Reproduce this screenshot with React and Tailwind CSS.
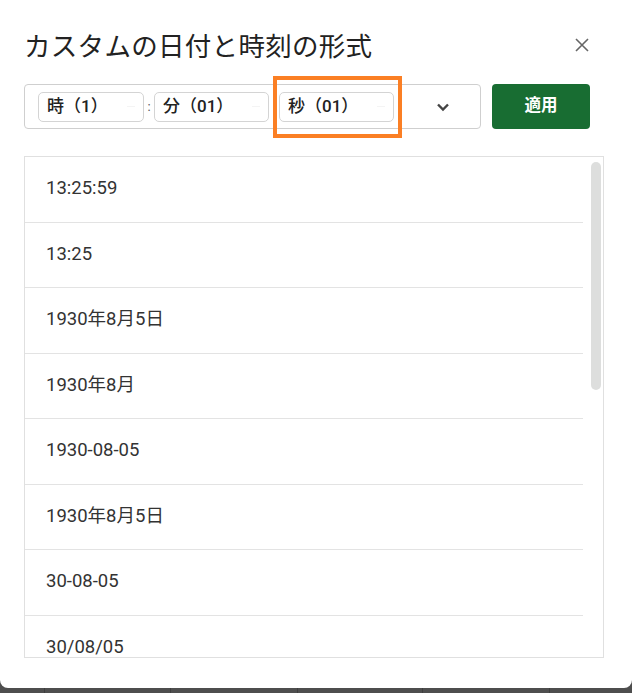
import React from "react";

const rows = [
  "13:25:59",
  "13:25",
  "1930年8月5日",
  "1930年8月",
  "1930-08-05",
  "1930年8月5日",
  "30-08-05",
  "30/08/05",
];

function Chip({ label, w }) {
  return (
    <div
      className={`${w} h-[30px] shrink-0 flex items-center justify-between pl-[8px] pr-[8px] border border-[#d4d4d4] rounded-[5px] bg-white`}
    >
      <span className="text-[17px] font-medium text-[#222] leading-none">{label}</span>
      <span className="w-[8px] h-[1px] bg-[#f4f4f4]" />
    </div>
  );
}

export default function App() {
  return (
    <div
      className="w-[632px] h-[693px] flex flex-col bg-[#4e4e4e] overflow-hidden"
      style={{ fontFamily: '"Roboto", "Noto Sans CJK JP", sans-serif' }}
    >
      <div className="h-[688px] shrink-0 bg-white rounded-b-[8px] flex flex-col pl-[24px] pr-[29px]">
        <div className="flex items-center justify-between pt-[29px] h-[61px]">
          <h1
            className="text-[26.5px] leading-[32px] font-normal text-[#222] tracking-[0.3px]"
            style={{ fontFamily: '"Noto Sans CJK JP", sans-serif' }}
          >
            カスタムの日付と時刻の形式
          </h1>
          <svg width="16" height="16" viewBox="0 0 16 16" className="mr-[13px]">
            <path d="M2 2 L14 14 M14 2 L2 14" stroke="#666" strokeWidth="1.6" fill="none" />
          </svg>
        </div>

        <div className="mt-[23px] flex items-center gap-[11px]">
          <div className="relative w-[457px] h-[45px] border border-[#cfcfcf] rounded-[4px] flex items-center pl-[13px]">
            <Chip label="時（1）" w="w-[106px]" />
            <span className="w-[10px] text-center text-[13px] text-[#555] leading-none">:</span>
            <Chip label="分（01）" w="w-[115px]" />
            <div className="w-[10px]" />
            <Chip label="秒（01）" w="w-[115px]" />
            <div className="flex-1 flex items-center justify-center pl-[12px]">
              <svg width="14" height="10" viewBox="0 0 14 10">
                <path d="M2 2.5 L7 7.5 L12 2.5" stroke="#444" strokeWidth="2.4" fill="none" />
              </svg>
            </div>
            <div className="absolute left-[248px] top-[-9px] w-[129px] h-[62px] border-[4px] border-[#fb7f24]" />
          </div>
          <button className="w-[98px] h-[45px] rounded-[4px] bg-[#186d32] text-white text-[16.5px] font-bold flex items-center justify-center">
            適用
          </button>
        </div>

        <div className="mt-[27px] w-[580px] h-[502px] border border-[#e0e0e0] flex overflow-hidden">
          <div className="w-[558px] flex flex-col">
            {rows.map((r, i) => (
              <div
                key={i}
                className="h-[65.5px] shrink-0 border-b border-[#e3e3e3] flex items-center pl-[21px] text-[18.5px] text-[#333]"
              >
                {r}
              </div>
            ))}
          </div>
          <div className="flex-1 pt-[5px] flex justify-center pl-[5px]">
            <div className="w-[10px] h-[228px] rounded-full bg-[#dddedd]" />
          </div>
        </div>
      </div>
      <div className="flex-1 flex">
        <div className="w-[45px] border-r border-[#3e3e3e]" />
        <div className="w-[126px] border-r border-[#3e3e3e]" />
        <div className="w-[127px] border-r border-[#3e3e3e]" />
        <div className="w-[125px] border-r border-[#3e3e3e]" />
        <div className="w-[127px] border-r border-[#3e3e3e]" />
        <div className="flex-1" />
      </div>
    </div>
  );
}
